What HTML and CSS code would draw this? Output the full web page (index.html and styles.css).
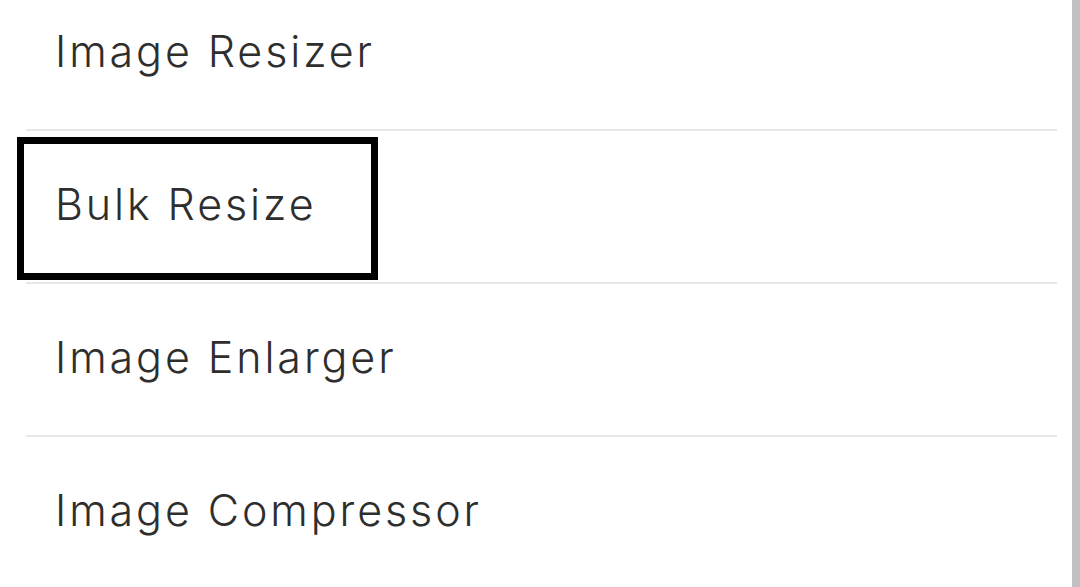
FILE: index.html
```html
<!DOCTYPE html>
<html lang="en">
<head>
<meta charset="utf-8">
<title>Menu</title>
<link rel="stylesheet" href="styles.css">
</head>
<body>
<div class="viewport">
  <nav class="menu">
    <ul class="menu-list">
      <li class="menu-item"><a class="menu-link" href="#">Image Resizer</a></li>
      <li class="menu-item"><a class="menu-link is-focused" href="#">Bulk Resize</a></li>
      <li class="menu-item"><a class="menu-link" href="#">Image Enlarger</a></li>
      <li class="menu-item"><a class="menu-link" href="#">Image Compressor</a></li>
    </ul>
  </nav>
  <div class="scrollbar"></div>
</div>
</body>
</html>
```
FILE: styles.css
```css
html, body {
  margin: 0;
  padding: 0;
  background: #ffffff;
  height: 100%;
  overflow: hidden;
}

.viewport {
  display: flex;
  height: 587px;
  overflow: hidden;
}

.menu {
  flex: 1;
  padding: 0 15px 0 26px;
}

.menu-list {
  list-style: none;
  margin: -22px 0 0 0;
  padding: 0;
}

.menu-item {
  padding: 13px 0 9px 0;
  border-bottom: 2px solid #e8e8e8;
}

.menu-link {
  display: flex;
  align-items: center;
  box-sizing: border-box;
  width: 347px;
  height: 129px;
  margin-left: -2px;
  padding-left: 31px;
  padding-bottom: 9px;
  font-family: "Inter", "Liberation Sans", sans-serif;
  font-size: 43px;
  font-weight: 350;
  letter-spacing: 2.9px;
  color: #2e2e2e;
  text-decoration: none;
  white-space: nowrap;
}

.menu-link.is-focused {
  outline: 7px solid #000000;
}

.scrollbar {
  width: 8px;
  background: #c1c1c1;
  flex: none;
}
```
